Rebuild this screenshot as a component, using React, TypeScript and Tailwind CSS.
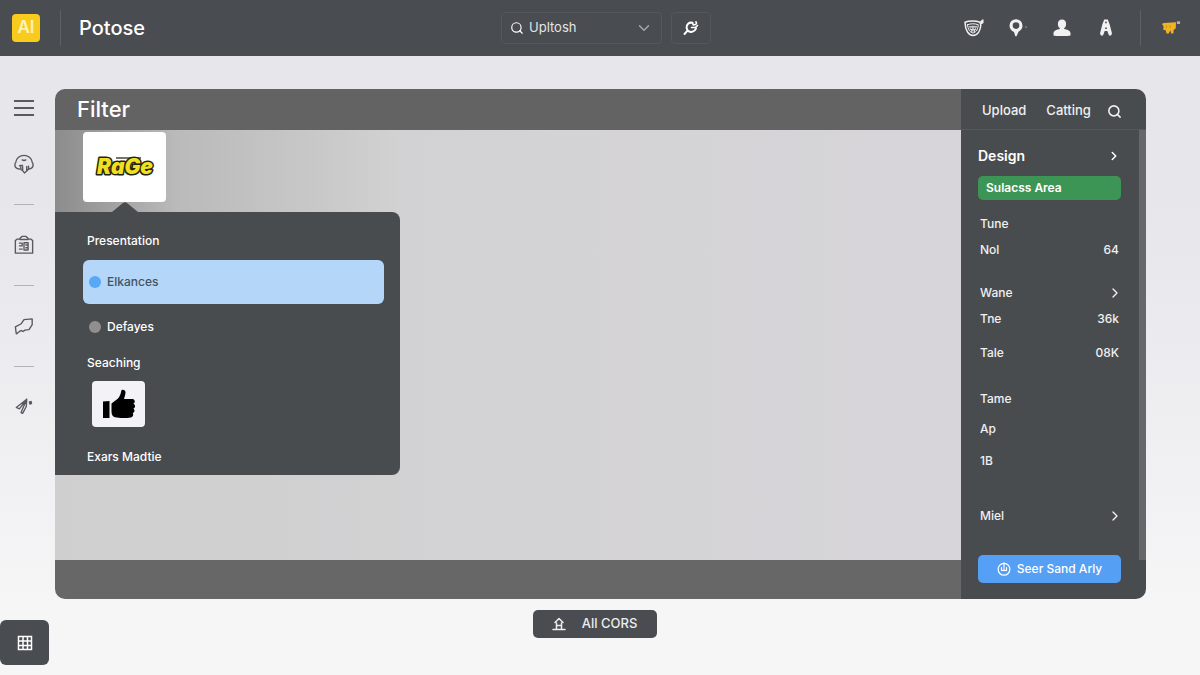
import { useState } from "react";
import type { ReactNode } from "react";
import { ChevronDown, ChevronRight, Search } from "lucide-react";

const stroke = { fill: "none", stroke: "currentColor", strokeWidth: 1.5, strokeLinecap: "round", strokeLinejoin: "round" } as const;

function PlugIcon() {
    return (
        <svg viewBox="0 0 18 18" className="size-[18px]" {...stroke} strokeWidth={2}>
            <path d="M10.500 3.800C7 3 4.300 5.300 4.600 8.800c.3 3.200 3 4.500 5.600 4 1.900-.4 3.200-1.500 3.800-3.300M5.300 11.800 2.500 15" />
            <path d="M9.500 8.500h4l2-2M10.500 3.800l.8 2.200 2.200-.5M14 2.800l.5 2" strokeWidth={1.600} />
        </svg>
    );
}

function BadgeIcon() {
    return (
        <svg viewBox="0 0 20 20" className="size-5" {...stroke} strokeWidth={1.500}>
            <path d="M1 4.200c4-1.600 11-1.600 15 0l.8 3c-.4 5.300-3 10-7.800 10.300C4.500 17.500 1.300 12.500 1 4.200Z" />
            <path d="M3.500 6.800c3-1.400 7.500-1.400 10.800 0-.3 3.700-1.800 7.700-5.300 8.200-3.300-.5-5-4-5.500-8.200Z" strokeWidth={1} />
            <path d="M5.500 8.800h2.300M10.300 8.800h2.200M6.300 11l1.500.8v1.700M9 8v4M11.500 11l-1.200 1v1.500" strokeWidth={1.200} />
            <path d="m16.800 4 2-2v2.500l-1.300.8" fill="currentColor" />
        </svg>
    );
}

function PinIcon() {
    return (
        <svg viewBox="0 0 20 20" className="size-5" fill="currentColor">
            <path fillRule="evenodd" d="M8 1.200a6.500 6.500 0 0 0-6.500 6.500c0 3 2 5 4.500 6.200l1.300 4.300h1.200l2-4.500c2.400-1.400 4-3.200 4-6A6.500 6.500 0 0 0 8 1.200Zm0 3.100a3.300 3.300 0 1 1 0 6.600 3.300 3.300 0 0 1 0-6.600Z" />
            <circle cx="18" cy="9" r=".6" />
        </svg>
    );
}

function UserIcon() {
    return (
        <svg viewBox="0 0 20 20" className="size-5" fill="currentColor">
            <path d="M10 1.500c2.600 0 4.100 1.800 4.100 4.400 0 1.800-.7 3.300-1.900 4.200v1c2.800.5 5.800 1.400 6.300 3.900v2.500c-2 .8-15 .8-17 0V15c.5-2.500 3.500-3.400 6.300-3.900v-1c-1.200-.9-1.900-2.400-1.900-4.200 0-2.600 1.500-4.400 4.100-4.400Z" />
        </svg>
    );
}

function CompassIcon() {
    return (
        <svg viewBox="0 0 20 20" className="size-5" fill="currentColor">
            <path fillRule="evenodd" d="M8.200 1.500h3.600l1.900 5L16 15.500l-1 2h-2L11.300 13H8.700L7 17.500H5l-1-2 2.300-9 1.900-5ZM10 3.500a.9.900 0 1 0 0 1.800.9.900 0 0 0 0-1.800Zm-.4 5.700-.6 1.800h2l-.6-1.800h-.8Z" />
        </svg>
    );
}

function MegaphoneIcon() {
    return (
        <svg viewBox="0 0 22 18" className="h-[18px] w-[22px]" fill="currentColor">
            <path d="M1 4.500 3 3.500l13.500-.8-.3 6.800-2.200 1.500-.5 4h-2.300l-1-3.500L8.500 15H6l-.8-3.500L2.500 11l.3-4L1 4.500Z" />
            <path d="M6 6v3m4-3v3" stroke="#c98d16" strokeWidth="1" />
            <rect x="17.500" y="1.500" width="3.500" height="3" rx=".5" fill="#b4b3b0" />
        </svg>
    );
}

function BrainIcon() {
    return (
        <svg viewBox="0 0 22 22" className="size-[22px]" {...stroke}>
            <path d="M6 16.500c-3-.3-5-2-5-4.500 0-1.300.3-2.500 1-3C2.500 4.500 6.500 1.500 11 1.500S19.500 4.500 20 9c.8.8 1 1.900 1 3 0 2.500-2 4.200-5 4.500" />
            <path d="M7.500 12.500v4.500l2 1.300V14M9.500 18.300l2 2.500 2.500-2v-5M14 18.800l2-2.300v-3M9 6.500c1.200.8 2.800.8 4 0M6 13l1.500-.5h2" />
        </svg>
    );
}

function ClipboardIcon() {
    return (
        <svg viewBox="0 0 22 22" className="size-[22px]" {...stroke}>
            <path d="M6.500 4.500h-3l-2 1.500v14h19V6l-2-1.500h-3M6.500 5V3.500L9 1.500h4l2.500 2V5h-9Z" />
            <path d="M6 9h3v3H6M6 15.500h3M11 8.500v8M11 8.500h4.500v8H11M13 11h2.500M13 14h2.500" />
        </svg>
    );
}

function TagIcon() {
    return (
        <svg viewBox="0 0 22 22" className="size-[22px]" {...stroke}>
            <path d="M2.500 19.500 1.500 12 8 8.500l3-4.500 9-.8v6.300l-3.500 5.500-4.500.5-2 1.500-2-1-2 1-3 2.500Z" />
        </svg>
    );
}

function PenIcon() {
    return (
        <svg viewBox="0 0 22 22" className="size-[22px]" {...stroke}>
            <path d="M2.500 11.500 14 2.500 6 13M14 2.500 8 16.500M14 2.500l-.5 8L9.500 18l-1.800-.8M2.500 11.500 6 13" />
            <path d="m17 5.500 1.800-.5.500 2-1.800.8-.5-2.300Z" fill="currentColor" />
        </svg>
    );
}

function ThumbIcon() {
    return (
        <svg viewBox="0 0 34 32" className="h-8 w-[34px]" fill="currentColor">
            <path d="M1 13.500 7.500 13v17H1V13.500Z" />
            <path d="M9.500 15.500 16 10.500c2-2.500 2.800-5 3.200-7.500.5-2.300 4.500-1.500 4.300 1.500-.1 2.500-1 4.500-1.500 6.500h8.500c2.800.3 3 4 .8 4.800 2.500 1 2.200 4.200 0 4.700 1.800 1.200 1.500 4-.6 4.400 1 1.400.6 4-1.800 4.600-5 .8-11.400.8-15.900-.2-2.500-.8-3.500-3-3.500-5.800v-8Z" />
        </svg>
    );
}

function BellTowerIcon() {
    return (
        <svg viewBox="0 0 14 14" className="size-3.5" {...stroke}>
            <path d="M1 12.500h12M4.500 12V6M9.500 12V6M3 5.500l4-4 4 4M5 8.500h4" />
        </svg>
    );
}

function TableIcon() {
    return (
        <svg viewBox="0 0 16 16" className="size-4" {...stroke} strokeLinecap="square" strokeLinejoin="miter">
            <path d="M1.500 1.500h13v13h-13v-13ZM1.500 6h13M1.500 10.500h13M6 1.500v13M10.500 1.500v13" />
        </svg>
    );
}

function TimerIcon() {
    return (
        <svg viewBox="0 0 14 14" className="size-3.5" {...stroke} strokeWidth={1.200}>
            <circle cx="7" cy="7.300" r="5.900" />
            <path d="M7 .8v4.500M4.500 5.500v3h5v-3M7 6.500v2" />
        </svg>
    );
}

function RageLogo() {
    return (
        <svg viewBox="0 0 60 32" className="h-8 w-[60px]" role="img" aria-label="Rage">
            <rect x="21" y="6" width="25" height="2" fill="#77756a" />
            <text
                x="30"
                y="23"
                textAnchor="middle"
                fill="#efe11f"
                stroke="#26240c"
                strokeWidth="3"
                strokeLinejoin="round"
                paintOrder="stroke"
                className="font-['Inter',sans-serif] text-[21px] font-black italic"
            >
                RaGe
            </text>
        </svg>
    );
}

function IconButton({ label, children }: { label: string; children: ReactNode }) {
    return (
        <button aria-label={label} className="flex h-[22px] w-5 items-center justify-center">
            {children}
        </button>
    );
}

function Row({ label, value, arrow, className }: { label: string; value?: string; arrow?: boolean; className: string }) {
    return (
        <div className={`flex h-5 items-center justify-between px-0.5 ${className}`}>
            <span>{label}</span>
            {value && <span>{value}</span>}
            {arrow && <ChevronRight size={16} strokeWidth={2} className="-mr-1" />}
        </div>
    );
}

const options = ["Elkances", "Defayes"];

export default function App() {
    const [picked, setPicked] = useState(options[0]);

    return (
        <div className="flex min-h-screen flex-col bg-linear-to-b from-[#e6e6eb] from-30% to-[#f6f6f7] to-90% font-['Inter','Liberation_Sans',sans-serif] text-white">
            <header className="grid h-14 grid-cols-[1fr_auto_1fr] items-center bg-[#494c50] pl-3">
                <div className="flex items-center">
                    <div className="flex size-7 items-center justify-center rounded bg-[#f8cb1d] text-[17px] font-semibold text-[#fff3b4]">AI</div>
                    <div className="ml-5 h-9 w-px bg-[#5d6064]" />
                    <h1 className="ml-[18px] text-xl font-medium">Potose</h1>
                </div>

                <div className="flex items-center gap-[9px]">
                    <div className="relative flex h-8 w-[161px] items-center rounded border border-[#54575b]">
                        <Search size={14} className="absolute left-2" />
                        <select aria-label="Search in" className="h-full w-full appearance-none pl-[27px] text-[13px] text-[#e4e5e7]">
                            <option>Upltosh</option>
                        </select>
                        <ChevronDown size={18} className="pointer-events-none absolute right-2 text-[#a5a8ab]" />
                    </div>
                    <button aria-label="Connect" className="flex h-8 w-10 items-center justify-center rounded border border-[#54575b]">
                        <PlugIcon />
                    </button>
                </div>

                <div className="flex items-center justify-end text-[#f1f1f2]">
                    <div className="flex gap-6 pr-6">
                        <IconButton label="Badges"><BadgeIcon /></IconButton>
                        <IconButton label="Location"><PinIcon /></IconButton>
                        <IconButton label="Account"><UserIcon /></IconButton>
                        <IconButton label="Tools"><CompassIcon /></IconButton>
                    </div>
                    <div className="flex h-9 w-[60px] items-center justify-center border-l border-[#5d6064] text-[#f0b323]">
                        <IconButton label="Announcements"><MegaphoneIcon /></IconButton>
                    </div>
                </div>
            </header>

            <div className="flex flex-1">
                <nav className="flex w-[55px] shrink-0 flex-col pt-[41px] pb-2.5 text-[#5a5960]">
                    <div className="flex w-12 flex-col items-center">
                        <button aria-label="Menu" className="flex h-[22px] w-5 flex-col justify-center gap-[5px]">
                            <span className="h-0.5 w-full bg-[#5a5960]" />
                            <span className="h-0.5 w-full bg-[#5a5960]" />
                            <span className="h-0.5 w-full bg-[#5a5960]" />
                        </button>
                        <div className="mt-[34px]"><IconButton label="Ideas"><BrainIcon /></IconButton></div>
                        <hr className="my-[29px] w-5 border-[#b3b2b8]" />
                        <IconButton label="Clipboard"><ClipboardIcon /></IconButton>
                        <hr className="my-[29px] w-5 border-[#b3b2b8]" />
                        <IconButton label="Tags"><TagIcon /></IconButton>
                        <hr className="my-[29px] w-5 border-[#b3b2b8]" />
                        <IconButton label="Pen"><PenIcon /></IconButton>
                    </div>
                    <button aria-label="Table view" className="mt-auto flex h-[45px] w-[49px] items-center justify-center rounded-md bg-[#494c50] text-white">
                        <TableIcon />
                    </button>
                </nav>

                <main className="min-w-0 flex-1 pt-[33px] pr-[54px]">
                    <div className="flex overflow-hidden rounded-[10px]">
                        <section className="flex min-w-0 flex-1 flex-col">
                            <div className="flex h-[41px] items-center bg-[#636363] pl-[22px]">
                                <h2 className="text-[22px] font-medium">Filter</h2>
                            </div>

                            <div className="flex-1 bg-linear-to-r from-[#cfcfcf] to-[#d7d5d9]">
                                <div className="flex h-[82px] w-[345px] bg-linear-to-r from-[#8c8c8c] via-[#bababa] via-35% to-[#cfcfcf]/0 pl-7">
                                    <div className="flex w-[83px] flex-col items-center pt-0.5">
                                        <div className="flex h-[70px] w-full items-center justify-center rounded bg-white">
                                            <RageLogo />
                                        </div>
                                        <svg viewBox="0 0 26 10" className="mt-auto h-2.5 w-[26px] fill-[#494c4f]">
                                            <path d="M0 10 11 1q2-1.500 4 0l11 9Z" />
                                        </svg>
                                    </div>
                                </div>

                                <div className="flex w-[345px] flex-col rounded-r-lg bg-[#494c4f] pt-[19px] pr-4 pb-2 pl-7 text-xs font-medium">
                                    <h3 className="h-5 px-1 leading-5">Presentation</h3>
                                    <div className="mt-[9px]">
                                        {options.map(option => (
                                            <label
                                                key={option}
                                                className={picked === option
                                                    ? "flex h-11 items-center gap-1.5 rounded-md bg-[#b4d6f8] px-1.5 text-[#45525f]"
                                                    : "mt-3 flex h-[22px] items-center gap-1.5 px-1.5"}
                                            >
                                                <input
                                                    type="radio"
                                                    name="presentation"
                                                    checked={picked === option}
                                                    onChange={() => setPicked(option)}
                                                    className="size-3 appearance-none rounded-full bg-[#8f8f8f] checked:bg-[#58a8f6]"
                                                />
                                                {option}
                                            </label>
                                        ))}
                                    </div>
                                    <h3 className="mt-[15px] h-5 px-1 leading-5">Seaching</h3>
                                    <button aria-label="Like" className="mt-2 ml-[9px] flex h-[46px] w-[53px] items-center justify-center rounded bg-[#f3f2f6] text-black">
                                        <ThumbIcon />
                                    </button>
                                    <h3 className="mt-5 h-5 px-1 leading-5">Exars Madtie</h3>
                                </div>
                            </div>

                            <div className="h-[39px] bg-[#676767]" />
                        </section>

                        <aside className="flex w-[185px] shrink-0 flex-col bg-[#494c4f] text-[#f0f0f1]">
                            <div className="flex h-[41px] items-center border-b border-[#56595c] pt-1 pl-[21px] text-[13px] font-medium">
                                <a href="#upload">Upload</a>
                                <a href="#catting" className="ml-5">Catting</a>
                                <button aria-label="Search" className="ml-4"><Search size={15} strokeWidth={2.500} /></button>
                            </div>

                            <div className="flex">
                                <div className="flex flex-1 flex-col pt-4 pr-[18px] pb-4 pl-[17px] text-xs font-medium">
                                    <div className="flex h-5 items-center justify-between text-sm font-semibold text-white">
                                        <h2>Design</h2>
                                        <ChevronRight size={14} strokeWidth={2.500} />
                                    </div>
                                    <button className="mt-2.5 h-6 rounded-[5px] bg-[#3c9555] px-2 text-left font-semibold text-white">Sulacss Area</button>
                                    <Row label="Tune" className="mt-3.5" />
                                    <Row label="Nol" value="64" className="mt-1.5" />
                                    <Row label="Wane" arrow className="mt-[23px]" />
                                    <Row label="Tne" value="36k" className="mt-1.5" />
                                    <Row label="Tale" value="08K" className="mt-3.5" />
                                    <Row label="Tame" className="mt-[26px]" />
                                    <Row label="Ap" className="mt-2.5" />
                                    <Row label="1B" className="mt-3" />
                                    <Row label="Miel" arrow className="mt-[35px]" />
                                    <button className="mt-[29px] flex h-7 items-center justify-center gap-1.5 rounded-[5px] bg-[#559ff5] text-white">
                                        <TimerIcon />
                                        Seer Sand Arly
                                    </button>
                                </div>
                                <div className="mb-[39px] w-[7px] bg-[#676668]" />
                            </div>
                        </aside>
                    </div>

                    <div className="mt-[11px] flex justify-center pr-3">
                        <button className="flex h-7 w-[124px] items-center justify-center gap-4 rounded-[5px] bg-[#494c50] text-[13px] font-medium text-[#ededee]">
                            <BellTowerIcon />
                            All CORS
                        </button>
                    </div>
                </main>
            </div>
        </div>
    );
}
